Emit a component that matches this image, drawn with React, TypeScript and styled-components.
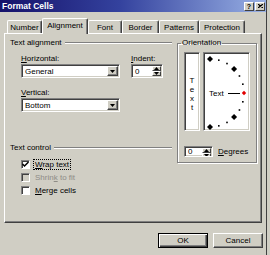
import React from 'react';
import styled, { createGlobalStyle } from 'styled-components';

const FACE = '#d0cec4';

const GlobalStyle = createGlobalStyle`
  html, body {
    margin: 0;
    padding: 0;
    background: ${FACE};
  }
  body {
    font-family: "Liberation Sans", Arial, sans-serif;
    font-size: 8px;
    color: #000;
  }
`;

const Dialog = styled.div`
  width: 267px;
  height: 255px;
  box-sizing: border-box;
  background: ${FACE};
  border-right: 1px solid #404040;
  display: flex;
  flex-direction: column;
`;

const TitleBar = styled.div`
  height: 12px;
  display: flex;
  align-items: center;
  padding: 0 1px 0 2px;
  background: linear-gradient(to right, #16126a, #34429e 45%, #98b0e4);
  color: #fff;
  font-weight: bold;
  font-size: 8.5px;
`;

const TitleText = styled.span`
  flex: 1;
`;

const TitleButton = styled.div`
  width: 10px;
  height: 9px;
  box-sizing: border-box;
  background: ${FACE};
  border: 1px solid;
  border-color: #fff #404040 #404040 #fff;
  display: flex;
  align-items: center;
  justify-content: center;
  color: #000;
  font-size: 7px;
  font-weight: bold;
  line-height: 7px;
  & + & {
    margin-left: 1px;
  }
`;

const TabStrip = styled.div`
  display: flex;
  align-items: flex-end;
  height: 15px;
  margin: 6px 0 0 7px;
  position: relative;
  z-index: 1;
`;

const Tab = styled.div<{ $w: number; $active?: boolean }>`
  width: ${(p) => p.$w}px;
  height: ${(p) => (p.$active ? 16 : 13)}px;
  margin-bottom: ${(p) => (p.$active ? -1 : 0)}px;
  box-sizing: border-box;
  background: ${FACE};
  border-top: 1px solid #fff;
  border-left: 1px solid #fff;
  border-right: 1px solid #404040;
  box-shadow: inset -1px 0 0 #808080;
  border-radius: 2px 2px 0 0;
  display: flex;
  align-items: center;
  justify-content: center;
  padding-bottom: ${(p) => (p.$active ? 2 : 0)}px;
  white-space: nowrap;
`;

const Panel = styled.div`
  margin-left: 4px;
  width: 258px;
  height: 190px;
  box-sizing: border-box;
  border: 1px solid;
  border-color: #fff #404040 #404040 #fff;
  box-shadow: inset -1px -1px 0 #808080;
  display: grid;
  grid-template-columns: 167px 80px;
  align-items: start;
  padding: 4px 0 0 5px;
`;

const Column = styled.div`
  display: flex;
  flex-direction: column;
`;

const GroupTitle = styled.div<{ $top?: number }>`
  display: flex;
  align-items: center;
  gap: 3px;
  height: 10px;
  line-height: 10px;
  margin-top: ${(p) => p.$top ?? 0}px;
  margin-right: 5px;
  &::after {
    content: '';
    flex: 1;
    height: 0;
    border-top: 1px solid #808080;
    border-bottom: 1px solid #fff;
  }
`;

const FieldRow = styled.div<{ $top: number }>`
  display: flex;
  gap: 11px;
  margin: ${(p) => p.$top}px 0 0 11px;
`;

const Field = styled.div`
  display: flex;
  flex-direction: column;
`;

const Label = styled.span`
  line-height: 9px;
  height: 9px;
  margin-bottom: 1px;
  white-space: nowrap;
`;

const Sunken = styled.div<{ $w: number; $h: number; $bg?: string }>`
  width: ${(p) => p.$w}px;
  height: ${(p) => p.$h}px;
  box-sizing: border-box;
  background: ${(p) => p.$bg ?? '#fff'};
  border: 1px solid;
  border-color: #808080 #fff #fff #808080;
  box-shadow: inset 1px 1px 0 #404040, inset -1px -1px 0 ${FACE};
  display: flex;
  align-items: stretch;
  overflow: hidden;
`;

const FieldText = styled.span`
  flex: 1;
  padding-left: 3px;
  display: flex;
  align-items: center;
`;

const ArrowButton = styled.div`
  width: 11px;
  margin: 1px 1px 1px 0;
  box-sizing: border-box;
  background: ${FACE};
  border: 1px solid;
  border-color: #fff #404040 #404040 #fff;
  box-shadow: inset -1px -1px 0 #808080;
  display: flex;
  align-items: center;
  justify-content: center;
`;

const SpinButtons = styled.div`
  width: 9px;
  margin: 1px 1px 1px 0;
  display: flex;
  flex-direction: column;
`;

const SpinHalf = styled.div`
  flex: 1;
  box-sizing: border-box;
  background: ${FACE};
  border: 1px solid;
  border-color: #fff #404040 #404040 #fff;
  display: flex;
  align-items: center;
  justify-content: center;
`;

const CheckList = styled.div`
  display: flex;
  flex-direction: column;
  margin: 5px 0 0 11px;
`;

const CheckRow = styled.label<{ $disabled?: boolean }>`
  display: flex;
  align-items: center;
  gap: 3px;
  height: 13px;
  color: ${(p) => (p.$disabled ? '#8e8c86' : '#000')};
`;

const Box = styled.div<{ $disabled?: boolean }>`
  width: 9px;
  height: 9px;
  box-sizing: border-box;
  background: ${(p) => (p.$disabled ? FACE : '#fff')};
  border: 1px solid;
  border-color: #808080 #fff #fff #808080;
  box-shadow: inset 1px 1px 0 #404040;
  display: flex;
  align-items: center;
  justify-content: center;
`;

const CheckText = styled.span<{ $focus?: boolean }>`
  padding: 0 1px;
  border: 1px dotted ${(p) => (p.$focus ? '#000' : 'transparent')};
  line-height: 9px;
`;

const GroupBox = styled.fieldset`
  margin: 0;
  width: 80px;
  height: 125px;
  box-sizing: border-box;
  padding: 4px 0 0 6px;
  border: 1px solid #808080;
  box-shadow: inset 1px 1px 0 #fff, 1px 1px 0 #fff;
  min-inline-size: 0;
`;

const Legend = styled.legend`
  padding: 0 1px;
  margin-left: -3px;
  line-height: 10px;
  font-size: 8px;
`;

const OrientRow = styled.div`
  display: flex;
  gap: 3px;
`;

const VerticalText = styled(Sunken)`
  flex-direction: column;
  align-items: center;
  justify-content: center;
  padding-top: 4px;
`;

const Letter = styled.span`
  display: block;
  height: 9px;
  line-height: 9px;
`;

const DegreesRow = styled.div`
  display: flex;
  align-items: center;
  gap: 5px;
  margin-top: 15px;
`;

const Footer = styled.div`
  display: flex;
  justify-content: flex-end;
  gap: 5px;
  margin-top: 10px;
  padding-right: 3px;
`;

const Button = styled.div<{ $default?: boolean }>`
  width: 50px;
  height: 15px;
  box-sizing: border-box;
  background: ${FACE};
  border: 1px solid;
  border-color: ${(p) => (p.$default ? '#000' : '#fff #404040 #404040 #fff')};
  box-shadow: ${(p) =>
    p.$default
      ? 'inset 1px 1px 0 #fff, inset -1px -1px 0 #404040, inset -2px -2px 0 #808080'
      : 'inset -1px -1px 0 #808080'};
  display: flex;
  align-items: center;
  justify-content: center;
`;

const DownArrow = () => (
  <svg width="5" height="3" viewBox="0 0 5 3">
    <path d="M0 0H5L2.5 3Z" fill="#000" />
  </svg>
);

const UpArrow = () => (
  <svg width="5" height="3" viewBox="0 0 5 3">
    <path d="M0 3H5L2.5 0Z" fill="#000" />
  </svg>
);

function Select({ value, width }: { value: string; width: number }) {
  return (
    <Sunken $w={width} $h={14}>
      <FieldText>{value}</FieldText>
      <ArrowButton>
        <DownArrow />
      </ArrowButton>
    </Sunken>
  );
}

function Spin({ value, width, height }: { value: string; width: number; height: number }) {
  return (
    <Sunken $w={width} $h={height}>
      <FieldText>{value}</FieldText>
      <SpinButtons>
        <SpinHalf>
          <UpArrow />
        </SpinHalf>
        <SpinHalf>
          <DownArrow />
        </SpinHalf>
      </SpinButtons>
    </Sunken>
  );
}

// semicircle of ticks, every 15 degrees, big ones every 45
function Dial() {
  const cx = 6;
  const cy = 40;
  const r = 34;
  const marks = [];
  for (let a = -90; a <= 90; a += 15) {
    const rad = (a * Math.PI) / 180;
    const x = cx + r * Math.cos(rad);
    const y = cy - r * Math.sin(rad);
    if (a === 0) {
      marks.push(<path key={a} d={`M${x} ${y - 2.2}L${x + 2.2} ${y}L${x} ${y + 2.2}L${x - 2.2} ${y}Z`} fill="#e00000" />);
    } else if (a % 45 === 0) {
      marks.push(<path key={a} d={`M${x} ${y - 3}L${x + 3} ${y}L${x} ${y + 3}L${x - 3} ${y}Z`} fill="#000" />);
    } else {
      marks.push(<rect key={a} x={x - 0.8} y={y - 0.8} width="1.6" height="1.6" fill="#000" />);
    }
  }
  return (
    <svg width="45" height="77" viewBox="0 0 45 77" style={{ display: 'block', flex: 'none' }}>
      <text x="5" y="43" fontSize="8" fontFamily="Liberation Sans, Arial, sans-serif">Text</text>
      <line x1="24" y1="40.5" x2="36" y2="40.5" stroke="#000" strokeWidth="1" />
      {marks}
    </svg>
  );
}

export default function App() {
  return (
    <>
      <GlobalStyle />
      <Dialog>
        <TitleBar>
          <TitleText>Format Cells</TitleText>
          <TitleButton>?</TitleButton>
          <TitleButton>
            <svg width="5" height="4" viewBox="0 0 5 4">
              <path d="M0 0L5 4M5 0L0 4" stroke="#000" strokeWidth="1.2" />
            </svg>
          </TitleButton>
        </TitleBar>

        <TabStrip>
          <Tab $w={35}>Number</Tab>
          <Tab $w={46} $active>Alignment</Tab>
          <Tab $w={34}>Font</Tab>
          <Tab $w={37}>Border</Tab>
          <Tab $w={40}>Patterns</Tab>
          <Tab $w={46}>Protection</Tab>
        </TabStrip>

        <Panel>
          <Column>
            <GroupTitle>Text alignment</GroupTitle>
            <FieldRow $top={6}>
              <Field>
                <Label><u>H</u>orizontal:</Label>
                <Select value="General" width={99} />
              </Field>
              <Field>
                <Label><u>I</u>ndent:</Label>
                <Spin value="0" width={32} height={14} />
              </Field>
            </FieldRow>
            <FieldRow $top={10}>
              <Field>
                <Label><u>V</u>ertical:</Label>
                <Select value="Bottom" width={99} />
              </Field>
            </FieldRow>

            <GroupTitle $top={31}>Text control</GroupTitle>
            <CheckList>
              <CheckRow>
                <Box>
                  <svg width="7" height="7" viewBox="0 0 7 7">
                    <path d="M0.5 3L2.5 5L6.5 1" stroke="#000" strokeWidth="1.5" fill="none" />
                  </svg>
                </Box>
                <CheckText $focus><u>W</u>rap text</CheckText>
              </CheckRow>
              <CheckRow $disabled>
                <Box $disabled />
                <CheckText>Shrin<u>k</u> to fit</CheckText>
              </CheckRow>
              <CheckRow>
                <Box />
                <CheckText><u>M</u>erge cells</CheckText>
              </CheckRow>
            </CheckList>
          </Column>

          <GroupBox>
            <Legend>Orientation</Legend>
            <OrientRow>
              <VerticalText $w={16} $h={79}>
                <Letter>T</Letter>
                <Letter>e</Letter>
                <Letter>x</Letter>
                <Letter>t</Letter>
              </VerticalText>
              <Sunken $w={47} $h={79}>
                <Dial />
              </Sunken>
            </OrientRow>
            <DegreesRow>
              <Spin value="0" width={29} height={11} />
              <span><u>D</u>egrees</span>
            </DegreesRow>
          </GroupBox>
        </Panel>

        <Footer>
          <Button $default>OK</Button>
          <Button>Cancel</Button>
        </Footer>
      </Dialog>
    </>
  );
}
